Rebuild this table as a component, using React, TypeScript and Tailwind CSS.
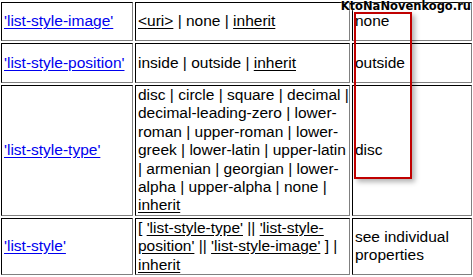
import React from "react";

const cell =
  "flex items-center border border-t-black border-l-black border-r-[#808080] border-b-[#808080] px-[2px]";

function Ref({ children }: { children: React.ReactNode }) {
  return <a className="text-[#0000ee] underline underline-offset-[2px]">{children}</a>;
}

function U({ children }: { children: React.ReactNode }) {
  return <a className="underline underline-offset-[2px]">{children}</a>;
}

export default function App() {
  return (
    <div className="relative w-[473px] h-[277px] bg-white overflow-hidden font-['Liberation_Sans',Arial,sans-serif] text-[15.5px] leading-[18.4px] text-black">
      <div className="grid grid-cols-[132px_215px_120px] grid-rows-[39px_40px_auto_auto] gap-[2px] pl-[1px] pt-[2px]">
        <div className={cell}>
          <Ref>'list-style-image'</Ref>
        </div>
        <div className={`${cell} px-[1px]`}>
          <span>
            <U>&lt;uri&gt;</U> | none | <U>inherit</U>
          </span>
        </div>
        <div className={cell}>none</div>

        <div className={cell}>
          <Ref>'list-style-position'</Ref>
        </div>
        <div className={`${cell} px-[1px]`}>
          <span>
            inside | outside | <U>inherit</U>
          </span>
        </div>
        <div className={cell}>outside</div>

        <div className={cell}>
          <Ref>'list-style-type'</Ref>
        </div>
        <div className={`${cell} px-[1px] whitespace-nowrap`}>
          <span>
            disc | circle | square | decimal |<br />
            decimal-leading-zero | lower-
            <br />
            roman | upper-roman | lower-
            <br />
            greek | lower-latin | upper-latin
            <br />
            | armenian | georgian | lower-
            <br />
            alpha | upper-alpha | none |<br />
            <U>inherit</U>
          </span>
        </div>
        <div className={cell}>disc</div>

        <div className={cell}>
          <Ref>'list-style'</Ref>
        </div>
        <div className={`${cell} px-[1px] whitespace-nowrap`}>
          <span>
            [ <U>'list-style-type'</U> || <U>'list-style-</U>
            <br />
            <U>position'</U> || <U>'list-style-image'</U> ] |<br />
            <U>inherit</U>
          </span>
        </div>
        <div className={cell}>
          <span>
            see individual
            <br />
            properties
          </span>
        </div>
      </div>

      <div className="absolute left-[354px] top-[12px] w-[58px] h-[167px] border-2 border-[#c00000] shadow-[3px_3px_5px_rgba(0,0,0,0.3)]" />

      <div className="absolute right-[2px] top-0 font-['DejaVu_Sans',sans-serif] font-bold text-[11.5px] leading-[13px] text-black [text-shadow:0_0_2px_#fff]">
        KtoNaNovenkogo.ru
      </div>
    </div>
  );
}
